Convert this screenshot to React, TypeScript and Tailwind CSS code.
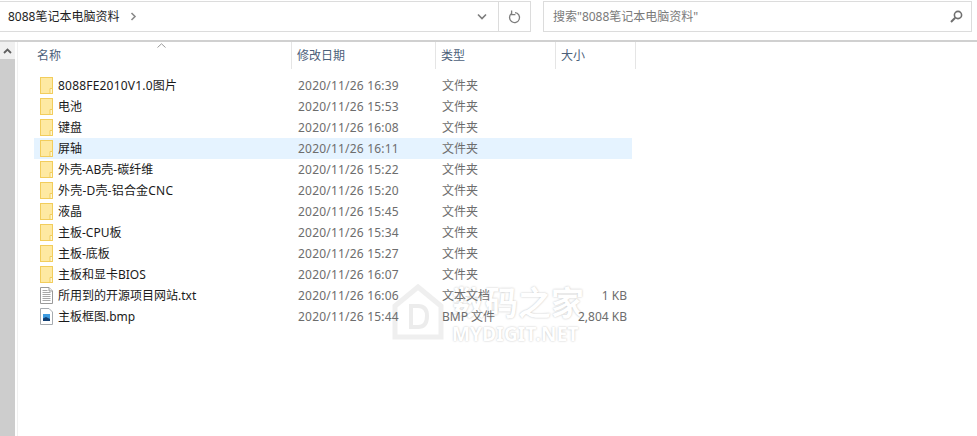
const rows = [
  { name: "8088FE2010V1.0图片", date: "2020/11/26 16:39", type: "文件夹", size: "", icon: "folder", wide: true },
  { name: "电池", date: "2020/11/26 15:53", type: "文件夹", size: "", icon: "folder" },
  { name: "键盘", date: "2020/11/26 16:08", type: "文件夹", size: "", icon: "folder" },
  { name: "屏轴", date: "2020/11/26 16:11", type: "文件夹", size: "", icon: "folder", hover: true },
  { name: "外壳-AB壳-碳纤维", date: "2020/11/26 15:22", type: "文件夹", size: "", icon: "folder" },
  { name: "外壳-D壳-铝合金CNC", date: "2020/11/26 15:20", type: "文件夹", size: "", icon: "folder", wide: true },
  { name: "液晶", date: "2020/11/26 15:45", type: "文件夹", size: "", icon: "folder" },
  { name: "主板-CPU板", date: "2020/11/26 15:34", type: "文件夹", size: "", icon: "folder" },
  { name: "主板-底板", date: "2020/11/26 15:27", type: "文件夹", size: "", icon: "folder" },
  { name: "主板和显卡BIOS", date: "2020/11/26 16:07", type: "文件夹", size: "", icon: "folder" },
  { name: "所用到的开源项目网站.txt", date: "2020/11/26 16:06", type: "文本文档", size: "1 KB", icon: "txt" },
  { name: "主板框图.bmp", date: "2020/11/26 15:44", type: "BMP 文件", size: "2,804 KB", icon: "bmp" },
];

function FileIcon({ kind }: { kind: string }) {
  if (kind === "folder") {
    return (
      <svg width="14" height="17" viewBox="0 0 14 17" className="shrink-0">
        <rect x="0.5" y="0.5" width="12" height="16" fill="#fee9a2" stroke="#f2cd5c" />
        <path d="M10 16.5V11.5H12.5V16.5Z" fill="#fff6d2" stroke="#f2cd5c" />
      </svg>
    );
  }
  if (kind === "txt") {
    return (
      <svg width="14" height="17" viewBox="0 0 14 17" className="shrink-0">
        <path d="M0.5 0.5H9L12.5 4V16.5H0.5Z" fill="#fff" stroke="#9a9a9a" />
        <path d="M9 0.5V4H12.5" fill="#eee" stroke="#9a9a9a" />
        <path d="M2.5 3.5H7.5M2.5 5.5H10.5M2.5 7.5H10.5M2.5 9.5H10.5M2.5 11.5H10.5M2.5 13.5H10.5" stroke="#a8a8a8" />
      </svg>
    );
  }
  return (
    <svg width="14" height="17" viewBox="0 0 14 17" className="shrink-0">
      <path d="M0.5 0.5H9L12.5 4V16.5H0.5Z" fill="#fff" stroke="#a6abb0" />
      <rect x="3" y="6" width="7" height="7" fill="#3d9be0" />
      <path d="M3 13V10.5L6 9L10 11V13Z" fill="#123f73" />
    </svg>
  );
}

function App() {
  return (
    <div
      className="relative w-[977px] h-[436px] overflow-hidden bg-white text-[12px] leading-[21px]"
      style={{ fontFamily: '"Noto Sans", "Noto Sans CJK SC", sans-serif' }}
    >
      {/* Address bar */}
      <div className="h-[42px] border-b-2 border-[#d0d0d0] flex pt-px">
        <div className="w-[531px] h-[31px] border border-l-0 border-[#dcdcdc] flex items-center">
          <span className="pl-2 text-[#1e1e1e]">8088笔记本电脑资料</span>
          <svg width="7" height="9" viewBox="0 0 7 9" className="ml-[11px]">
            <path d="M1.5 1L5 4.5L1.5 8" fill="none" stroke="#8a8a8a" strokeWidth="1.6" />
          </svg>
          <div className="ml-auto w-[32px] h-full flex items-center justify-center">
            <svg width="10" height="7" viewBox="0 0 10 7">
              <path d="M1 1.5L5 5.5L9 1.5" fill="none" stroke="#7d7d7d" strokeWidth="1.6" />
            </svg>
          </div>
          <div className="w-[32px] h-full border-l border-[#dcdcdc] flex items-center justify-center">
            <svg width="13" height="14" viewBox="0 0 13 14">
              <path d="M3.5 3.6A5 5 0 1 0 7 2.6" fill="none" stroke="#7d7d7d" strokeWidth="1.3" />
              <path d="M3.6 0.5V4.6H7.4" fill="none" stroke="#7d7d7d" strokeWidth="1.3" />
            </svg>
          </div>
        </div>
        <div className="ml-[12px] w-[429px] h-[31px] border border-[#dcdcdc] flex items-center pl-[9px] pr-[8px] text-[#7a7a7a]">
          <span>搜索"8088笔记本电脑资料"</span>
          <svg width="13" height="13" viewBox="0 0 13 13" className="ml-auto">
            <circle cx="8" cy="5" r="3.6" fill="none" stroke="#6f6f6f" strokeWidth="1.6" />
            <path d="M5.2 7.8L1 12" stroke="#6f6f6f" strokeWidth="2" />
          </svg>
        </div>
      </div>

      {/* Watermark */}
      <div className="absolute left-[392px] top-[284px] flex items-start gap-[8px] pointer-events-none">
        <svg width="52" height="56" viewBox="0 0 52 56">
          <path d="M26 3L49 22V53H3V22Z" fill="none" stroke="#efefef" strokeWidth="5" />
          <path d="M19 22H26Q35 22 35 32Q35 43 26 43H19Z" fill="none" stroke="#ececec" strokeWidth="4" />
        </svg>
        <div className="flex flex-col text-white font-bold [text-shadow:0_0_2px_#bdbdbd]">
          <span className="text-[33px] leading-[38px] w-[132px] whitespace-nowrap">数码之家</span>
          <span className="text-[19px] leading-[20px] mt-[2px] tracking-[0.2px] whitespace-nowrap">MYDIGIT.NET</span>
        </div>
      </div>

      <div className="relative z-10 flex h-[394px]">
        {/* Scrollbar */}
        <div className="w-[15px] bg-[#cdcdcd] flex flex-col">
          <div className="h-[17px] bg-[#f0f0f0] flex items-center justify-center">
            <svg width="9" height="6" viewBox="0 0 9 6">
              <path d="M1 5L4.5 1.5L8 5" fill="none" stroke="#606060" strokeWidth="1.8" />
            </svg>
          </div>
        </div>
        <div className="w-[3px] border-r border-[#f0f0f0]" />

        {/* File list */}
        <div className="relative flex-1">
          <svg width="9" height="5" viewBox="0 0 9 5" className="absolute left-[139px] top-px">
            <path d="M0.5 4.5L4.5 0.8L8.5 4.5" fill="none" stroke="#9a9a9a" />
          </svg>
          <div className="flex h-[27px] text-[#4c607a] leading-[27px]">
            <div className="w-[274px] pl-[19px] border-r border-[#e5e5e5]">名称</div>
            <div className="w-[144px] pl-[5px] border-r border-[#e5e5e5]">修改日期</div>
            <div className="w-[120px] pl-[5px] border-r border-[#e5e5e5]">类型</div>
            <div className="w-[80px] pl-[5px] border-r border-[#e5e5e5]">大小</div>
          </div>
          <div className="mt-[6px] ml-[16px] w-[598px]">
            {rows.map((r) => (
              <div key={r.name} className={`flex items-center h-[21px] ${r.hover ? "bg-[#e5f3ff]" : ""}`}>
                <div className="w-[258px] pl-[6px] flex items-center">
                  <FileIcon kind={r.icon} />
                  <span className={`ml-[4px] text-[#1a1a1a] ${r.wide ? "tracking-[0.2px]" : ""}`}>{r.name}</span>
                </div>
                <div className="w-[144px] pl-[6px] text-[#6d6d6d] tracking-[0.2px]">{r.date}</div>
                <div className="w-[100px] pl-[6px] text-[#6d6d6d]">{r.type}</div>
                <div className="flex-1 pr-[5px] text-right text-[#6d6d6d]">{r.size}</div>
              </div>
            ))}
          </div>
        </div>
      </div>
    </div>
  );
}

export default App;
